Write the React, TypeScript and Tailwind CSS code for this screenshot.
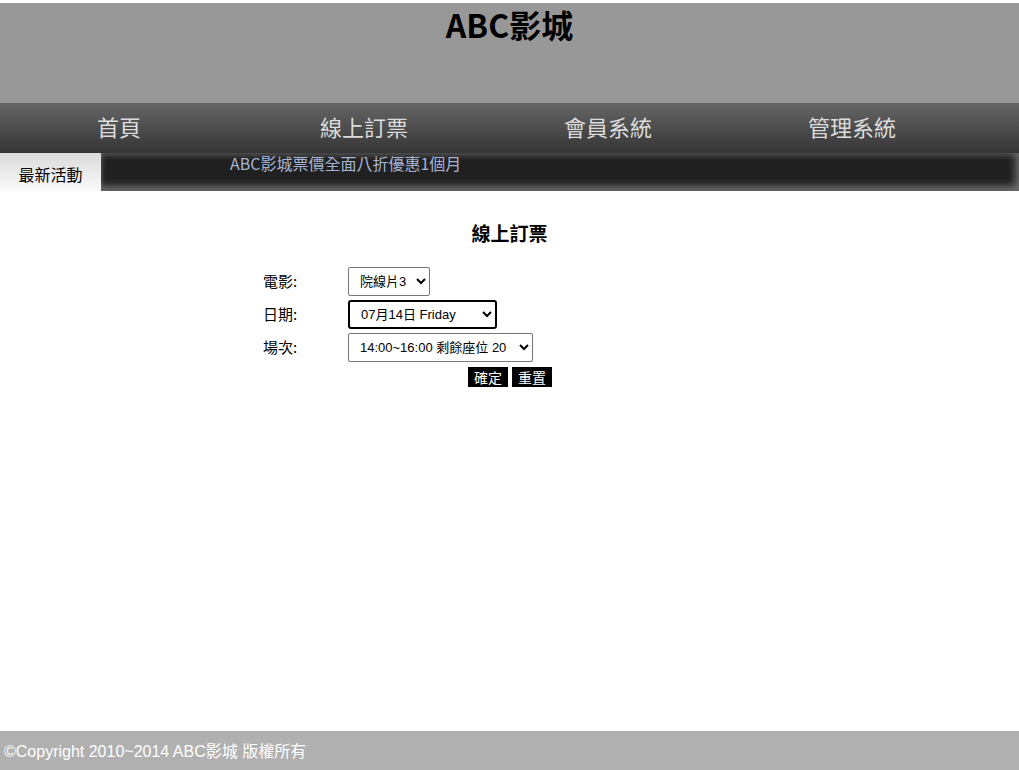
import React from "react";

const cjk = "font-['Liberation_Sans','Noto_Sans_CJK_TC',sans-serif]";
const noto = "font-['Noto_Sans_CJK_TC',sans-serif]";

export default function App() {
  return (
    <div className={`w-[1019px] h-[770px] bg-white flex flex-col ${cjk}`}>
      <div className="h-[3px] bg-white" />
      <header className="h-[100px] bg-[#989898] flex justify-center">
        <h1 className={`text-[32px] font-bold text-black leading-none mt-[5px] ${noto}`}>ABC影城</h1>
      </header>
      <nav className="h-[50px] bg-gradient-to-b from-[#666666] to-[#353535] flex items-center pb-[3px]">
        <div className={`w-[100px] ml-[69px] text-center text-[22px] text-[#dcdcdc] ${noto}`}>首頁</div>
        <div className={`w-[100px] ml-[145px] text-center text-[22px] text-[#dcdcdc] ${noto}`}>線上訂票</div>
        <div className={`w-[100px] ml-[144px] text-center text-[22px] text-[#dcdcdc] ${noto}`}>會員系統</div>
        <div className={`w-[100px] ml-[144px] text-center text-[22px] text-[#dcdcdc] ${noto}`}>管理系統</div>
      </nav>
      <div className="h-[38px] flex">
        <div className="w-[101px] bg-gradient-to-b from-[#dadada] to-[#fafafa] flex items-center justify-center pt-[3px]">
          <span className={`text-[16px] text-black ${noto}`}>最新活動</span>
        </div>
        <div className="flex-1 bg-[#202020] shadow-[inset_0_-6px_6px_rgba(120,120,120,0.7),inset_-6px_0_6px_rgba(120,120,120,0.5),inset_0_4px_4px_rgba(80,80,80,0.6)] pl-[129px]">
          <div className={`text-[16px] text-[#a6b5d6] ${noto} leading-[20px]`}>ABC影城票價全面八折優惠1個月</div>
        </div>
      </div>
      <main className="flex-1 flex flex-col">
        <h2 className={`mt-[30px] text-center text-[19px] font-bold text-black ${noto} leading-[24px]`}>線上訂票</h2>
        <div className="mt-[22px] ml-[263px] flex flex-col text-[15px] text-black">
          <div className="flex items-center h-[29px]">
            <span className={`w-[85px] ${noto}`}>電影:</span>
            <select className={`h-[29px] w-[82px] border border-[#767676] rounded-[2px] text-[13px] pl-[7px] bg-white ${cjk}`}>
              <option>院線片3</option>
            </select>
          </div>
          <div className="flex items-center h-[29px] mt-[4px]">
            <span className={`w-[85px] ${noto}`}>日期:</span>
            <select className={`h-[29px] w-[149px] border-2 border-black rounded-[3px] text-[13px] pl-[7px] bg-white ${cjk}`}>
              <option>07月14日 Friday</option>
            </select>
          </div>
          <div className="flex items-center h-[29px] mt-[4px]">
            <span className={`w-[85px] ${noto}`}>場次:</span>
            <select className={`h-[29px] w-[185px] border border-[#767676] rounded-[2px] text-[13px] pl-[7px] bg-white ${cjk}`}>
              <option>14:00~16:00 剩餘座位 20</option>
            </select>
          </div>
          <div className="flex gap-[4px] mt-[5px] ml-[205px]">
            <button className={`h-[20px] w-[40px] bg-black text-white text-[14px] leading-none ${noto}`}>確定</button>
            <button className={`h-[20px] w-[40px] bg-black text-white text-[14px] leading-none ${noto}`}>重置</button>
          </div>
        </div>
      </main>
      <footer className="h-[39px] bg-[#b0b0b0] flex items-center pl-[4px] pt-[2px]">
        <span className={`text-[16px] text-white ${cjk}`}>©Copyright 2010~2014 ABC影城 版權所有</span>
      </footer>
    </div>
  );
}
